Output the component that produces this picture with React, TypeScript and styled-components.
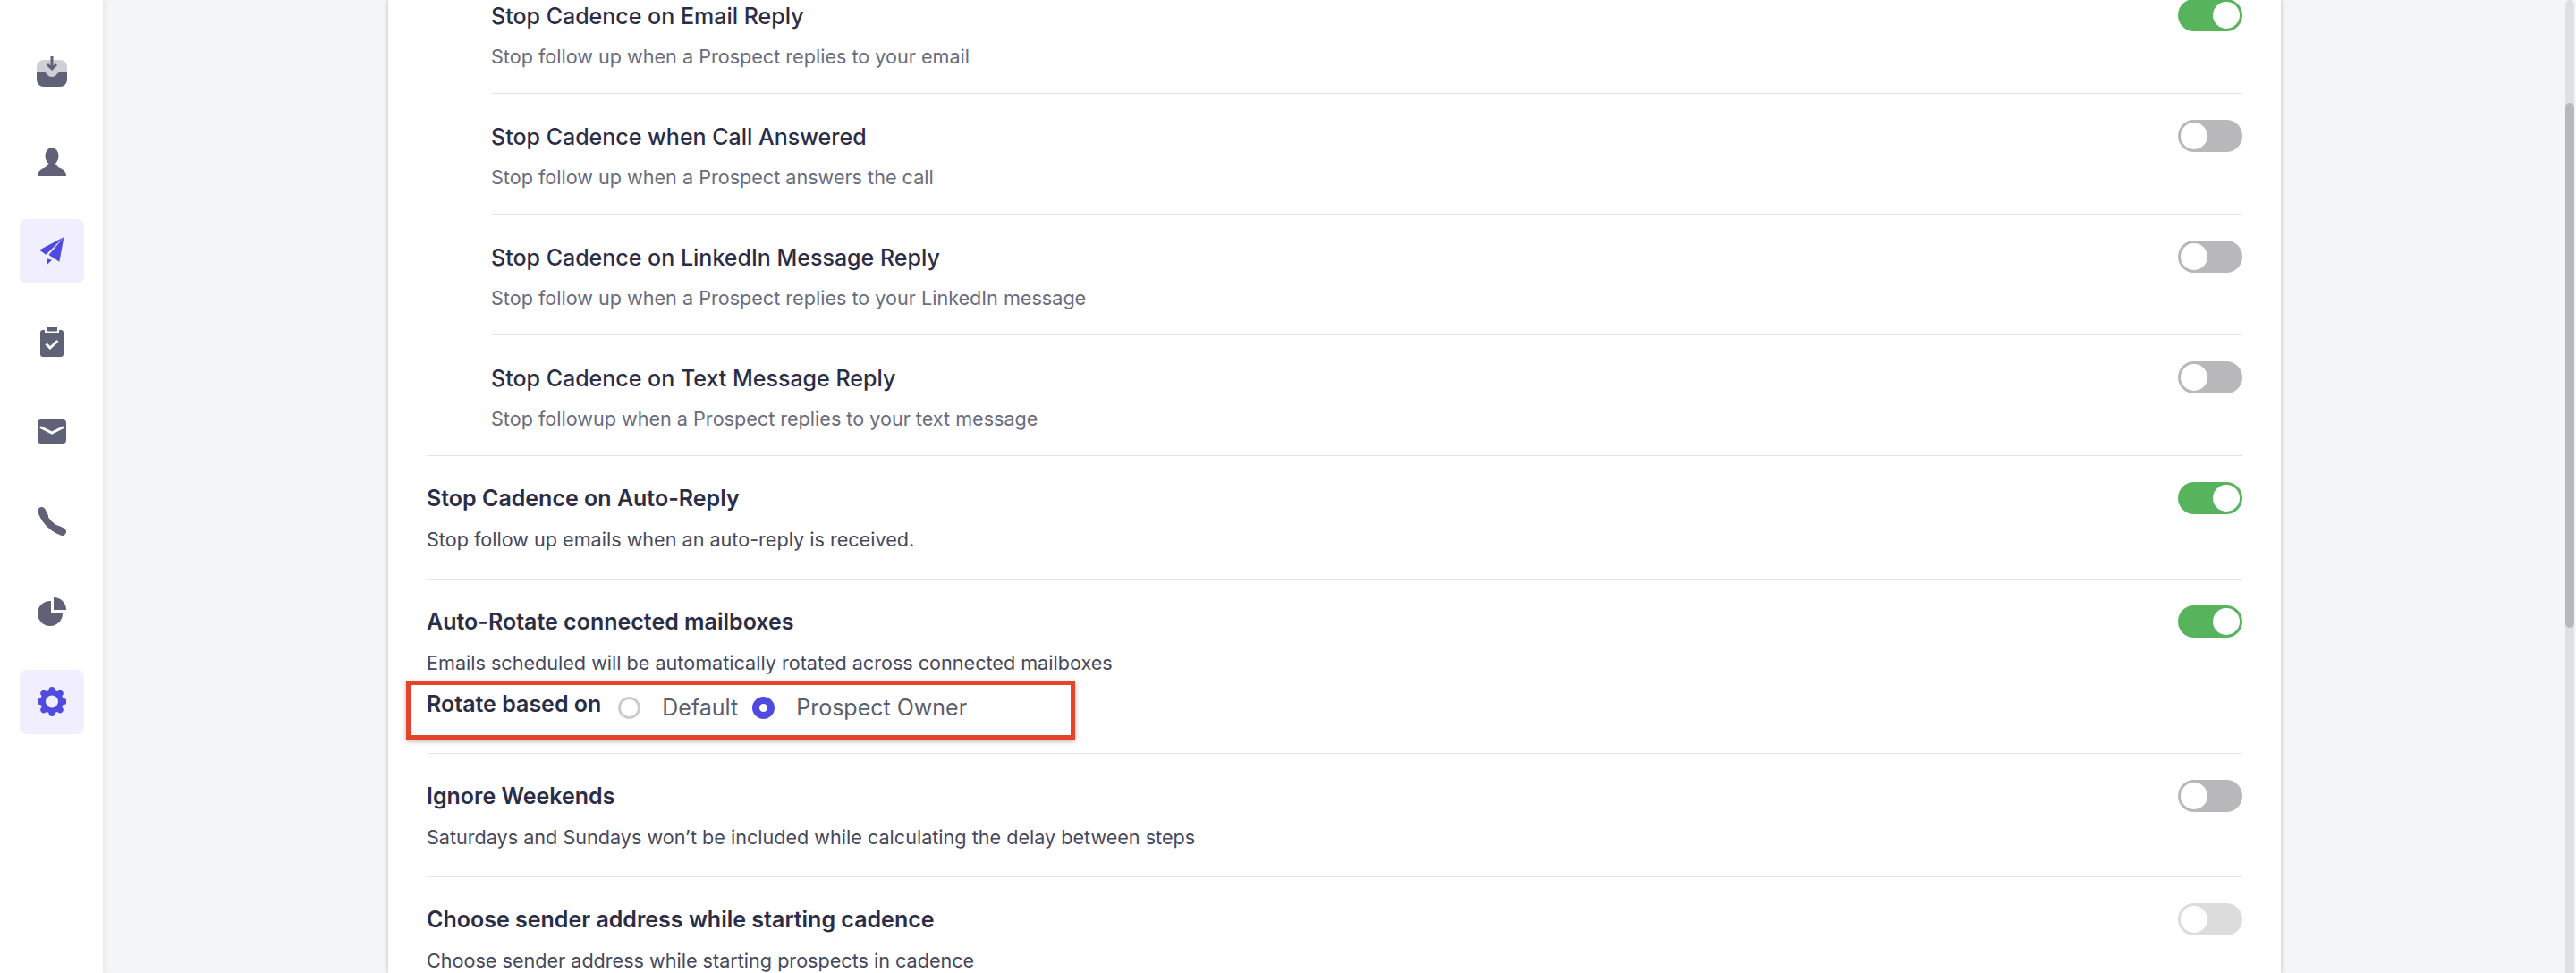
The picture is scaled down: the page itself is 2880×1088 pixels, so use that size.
import React from 'react'
import styled, { createGlobalStyle } from 'styled-components'

const GlobalStyle = createGlobalStyle`
  html, body {
    margin: 0;
    padding: 0;
    height: 100%;
    overflow: hidden;
    background: #f4f5f8;
    font-family: Inter, "Noto Sans", sans-serif;
  }
`

const Page = styled.div`
  position: relative;
  display: flex;
  height: 1088px;
  overflow: hidden;
  background: #f4f5f8;
`

const Sidebar = styled.nav`
  flex: 0 0 115px;
  display: flex;
  flex-direction: column;
  align-items: center;
  gap: 28.7px;
  padding-top: 44px;
  box-sizing: border-box;
  background: #fff;
  box-shadow: 2px 0 6px rgba(40, 40, 70, 0.07);
`

const NavItem = styled.div<{ $active?: boolean }>`
  width: 72px;
  height: 72px;
  flex: none;
  display: flex;
  align-items: center;
  justify-content: center;
  border-radius: 8px;
  background: ${(p) => (p.$active ? '#f1effd' : 'transparent')};
`

const Main = styled.main`
  flex: 1;
  display: flex;
  padding-left: 319px;
  min-width: 0;
`

const Card = styled.section`
  flex: 0 0 2116px;
  box-sizing: border-box;
  padding: 0 43px;
  background: #fff;
  box-shadow: 0 0 5px rgba(50, 50, 70, 0.3);
`

const List = styled.div`
  margin-top: -30px;
`

const Row = styled.div<{ $nested?: boolean; $last?: boolean }>`
  display: flex;
  justify-content: space-between;
  align-items: flex-start;
  margin-left: ${(p) => (p.$nested ? '72px' : '0')};
  padding: 29px 0 ${(p) => (p.$nested ? '25px' : '28px')};
  border-bottom: ${(p) => (p.$last ? 'none' : '1px solid #e4e4e8')};
`

const RowRule = styled.div`
  height: 1px;
  background: #e4e4e8;
`

const RowText = styled.div`
  min-width: 0;
`

const Title = styled.div<{ $nested?: boolean }>`
  margin-top: ${(p) => (p.$nested ? '3px' : '2px')};
  font-size: 25px;
  line-height: 32px;
  font-weight: ${(p) => (p.$nested ? 500 : 600)};
  color: #2b2d47;
`

const Description = styled.div<{ $nested?: boolean }>`
  margin-top: ${(p) => (p.$nested ? '13px' : '14px')};
  font-size: 21.6px;
  line-height: 32px;
  color: ${(p) => (p.$nested ? '#6a6c7e' : '#46485c')};
`

const Toggle = styled.div<{ $on?: boolean; $disabled?: boolean }>`
  flex: none;
  width: 72px;
  height: 36px;
  box-sizing: border-box;
  padding: 3px;
  display: flex;
  justify-content: ${(p) => (p.$on ? 'flex-end' : 'flex-start')};
  border-radius: 18px;
  background: ${(p) => (p.$on ? '#57b45d' : p.$disabled ? '#dcdcdc' : '#b8b8ba')};

  &::after {
    content: '';
    width: 30px;
    height: 30px;
    border-radius: 50%;
    background: #fff;
  }
`

const RotateRow = styled.div`
  position: relative;
  display: flex;
  align-items: center;
  margin: 14px 0 3px;
  height: 40px;
`

const RotateLabel = styled.span`
  font-size: 25px;
  font-weight: 600;
  color: #2b2d47;
  margin-top: -8px;
  margin-right: 19px;
`

const Radio = styled.span<{ $checked?: boolean }>`
  width: 25px;
  height: 25px;
  box-sizing: border-box;
  flex: none;
  border-radius: 50%;
  background: #fff;
  border: ${(p) => (p.$checked ? '8px solid #4f4be0' : '3px solid #cccccc')};
`

const RadioLabel = styled.span`
  margin: 0 16px 0 24px;
  font-size: 25px;
  color: #5b5d70;
`

const Highlight = styled.div`
  position: absolute;
  left: -23px;
  top: -10px;
  width: 748px;
  height: 66px;
  box-sizing: border-box;
  border: 5px solid #e5432a;
  box-shadow: 0 2px 5px rgba(60, 30, 30, 0.35);
  pointer-events: none;
`

const ScrollTrack = styled.div`
  position: absolute;
  top: 0;
  right: 2px;
  bottom: 0;
  width: 10px;
  border-radius: 5px 5px 0 0;
  background: #e0e0e3;
`

const ScrollThumb = styled.div`
  margin-top: 115px;
  height: 587px;
  border-radius: 5px;
  background: #b8b8ba;
`

const GRAY = '#5f6177'
const BLUE = '#4f4be0'

const InboxIcon = () => (
  <svg width="34" height="34" viewBox="0 0 34 34">
    <rect x="0" y="4" width="34" height="30" rx="8" fill="#cfd0d6" />
    <path d="M0 18h9c2 0 3 5 8 5s6-5 8-5h9v8a8 8 0 0 1-8 8H8a8 8 0 0 1-8-8z" fill={GRAY} />
    <path d="M17 0v13M12 9l5 5 5-5" stroke={GRAY} strokeWidth="3" fill="none" />
  </svg>
)

const PersonIcon = () => (
  <svg width="32" height="32" viewBox="0 0 32 32">
    <ellipse cx="16" cy="9.5" rx="7.5" ry="9.5" fill={GRAY} />
    <path d="M0 32c0-6 4-8 9-10l3-4h8l3 4c5 2 9 4 9 10z" fill={GRAY} />
  </svg>
)

const PlaneIcon = () => (
  <svg width="28" height="32" viewBox="0 0 28 32" fill={BLUE}>
    <path d="M27.5 0 0 14.6l7.300 5.200z" />
    <path d="M27.5 0 10.500 20l11.800 7.800z" />
    <path d="M8.300 24.300 14 25.700 9 30.500z" />
  </svg>
)

const ClipboardIcon = () => (
  <svg width="26" height="33" viewBox="0 0 26 33">
    <path d="M3 3h2v3h16V3h2a3 3 0 0 1 3 3v24a3 3 0 0 1-3 3H3a3 3 0 0 1-3-3V6a3 3 0 0 1 3-3z" fill={GRAY} />
    <rect x="7" y="0" width="12" height="4.5" fill={GRAY} />
    <path d="M6.500 18.500l4.500 4.500 8.500-8" stroke="#fff" strokeWidth="3" fill="none" />
  </svg>
)

const MailIcon = () => (
  <svg width="32" height="27" viewBox="0 0 32 27">
    <rect width="32" height="27" rx="4" fill={GRAY} />
    <path d="M4 9l12 6 12-6" stroke="#fff" strokeWidth="3" strokeLinecap="round" fill="none" />
  </svg>
)

const PhoneIcon = () => (
  <svg width="32" height="32" viewBox="0 0 32 32" fill="none" stroke={GRAY} strokeLinecap="round">
    <path d="M6 8C9 16 16 23 24 26" strokeWidth="8" />
    <path d="M4.500 4.500l3 6M22 25l5.500 2.500" strokeWidth="9" />
  </svg>
)

const PieIcon = () => (
  <svg width="32" height="32" viewBox="0 0 32 32" fill={GRAY}>
    <path d="M18 0a14 14 0 0 1 14 14H18z" />
    <path d="M15 4a14 14 0 1 0 13 14H15z" />
  </svg>
)

const GearIcon = () => (
  <svg width="32" height="33" viewBox="0 0 32 33">
    <g fill={BLUE}>
      {[0, 45, 90, 135, 180, 225, 270, 315].map((deg) => (
        <circle key={deg} cx="16" cy="3.500" r="3.500" transform={`rotate(${deg} 16 16.500)`} />
      ))}
    </g>
    <circle cx="16" cy="16.500" r="10" fill="none" stroke={BLUE} strokeWidth="6" />
  </svg>
)

const navItems = [
  { key: 'inbox', icon: <InboxIcon /> },
  { key: 'person', icon: <PersonIcon /> },
  { key: 'cadence', icon: <PlaneIcon />, active: true },
  { key: 'tasks', icon: <ClipboardIcon /> },
  { key: 'mail', icon: <MailIcon /> },
  { key: 'phone', icon: <PhoneIcon /> },
  { key: 'reports', icon: <PieIcon /> },
  { key: 'settings', icon: <GearIcon />, active: true },
]

const nestedRows = [
  { title: 'Stop Cadence on Email Reply', text: 'Stop follow up when a Prospect replies to your email', on: true },
  { title: 'Stop Cadence when Call Answered', text: 'Stop follow up when a Prospect answers the call' },
  { title: 'Stop Cadence on LinkedIn Message Reply', text: 'Stop follow up when a Prospect replies to your LinkedIn message' },
  { title: 'Stop Cadence on Text Message Reply', text: 'Stop followup when a Prospect replies to your text message' },
]

export default function App() {
  return (
    <Page>
      <GlobalStyle />
      <Sidebar>
        {navItems.map((item) => (
          <NavItem key={item.key} $active={item.active}>
            {item.icon}
          </NavItem>
        ))}
      </Sidebar>
      <Main>
        <Card>
          <List>
            {nestedRows.map((row) => (
              <Row key={row.title} $nested $last={row.title.includes('Text')}>
                <RowText>
                  <Title $nested>{row.title}</Title>
                  <Description $nested>{row.text}</Description>
                </RowText>
                <Toggle $on={row.on} />
              </Row>
            ))}
            <RowRule />
            <Row>
              <RowText>
                <Title>Stop Cadence on Auto-Reply</Title>
                <Description>Stop follow up emails when an auto-reply is received.</Description>
              </RowText>
              <Toggle $on />
            </Row>
            <Row>
              <RowText>
                <Title>Auto-Rotate connected mailboxes</Title>
                <Description>Emails scheduled will be automatically rotated across connected mailboxes</Description>
                <RotateRow>
                  <RotateLabel>Rotate based on</RotateLabel>
                  <Radio />
                  <RadioLabel>Default</RadioLabel>
                  <Radio $checked />
                  <RadioLabel>Prospect Owner</RadioLabel>
                  <Highlight />
                </RotateRow>
              </RowText>
              <Toggle $on />
            </Row>
            <Row>
              <RowText>
                <Title>Ignore Weekends</Title>
                <Description>Saturdays and Sundays won’t be included while calculating the delay between steps</Description>
              </RowText>
              <Toggle />
            </Row>
            <Row $last>
              <RowText>
                <Title>Choose sender address while starting cadence</Title>
                <Description>Choose sender address while starting prospects in cadence</Description>
              </RowText>
              <Toggle $disabled />
            </Row>
          </List>
        </Card>
      </Main>
      <ScrollTrack>
        <ScrollThumb />
      </ScrollTrack>
    </Page>
  )
}
